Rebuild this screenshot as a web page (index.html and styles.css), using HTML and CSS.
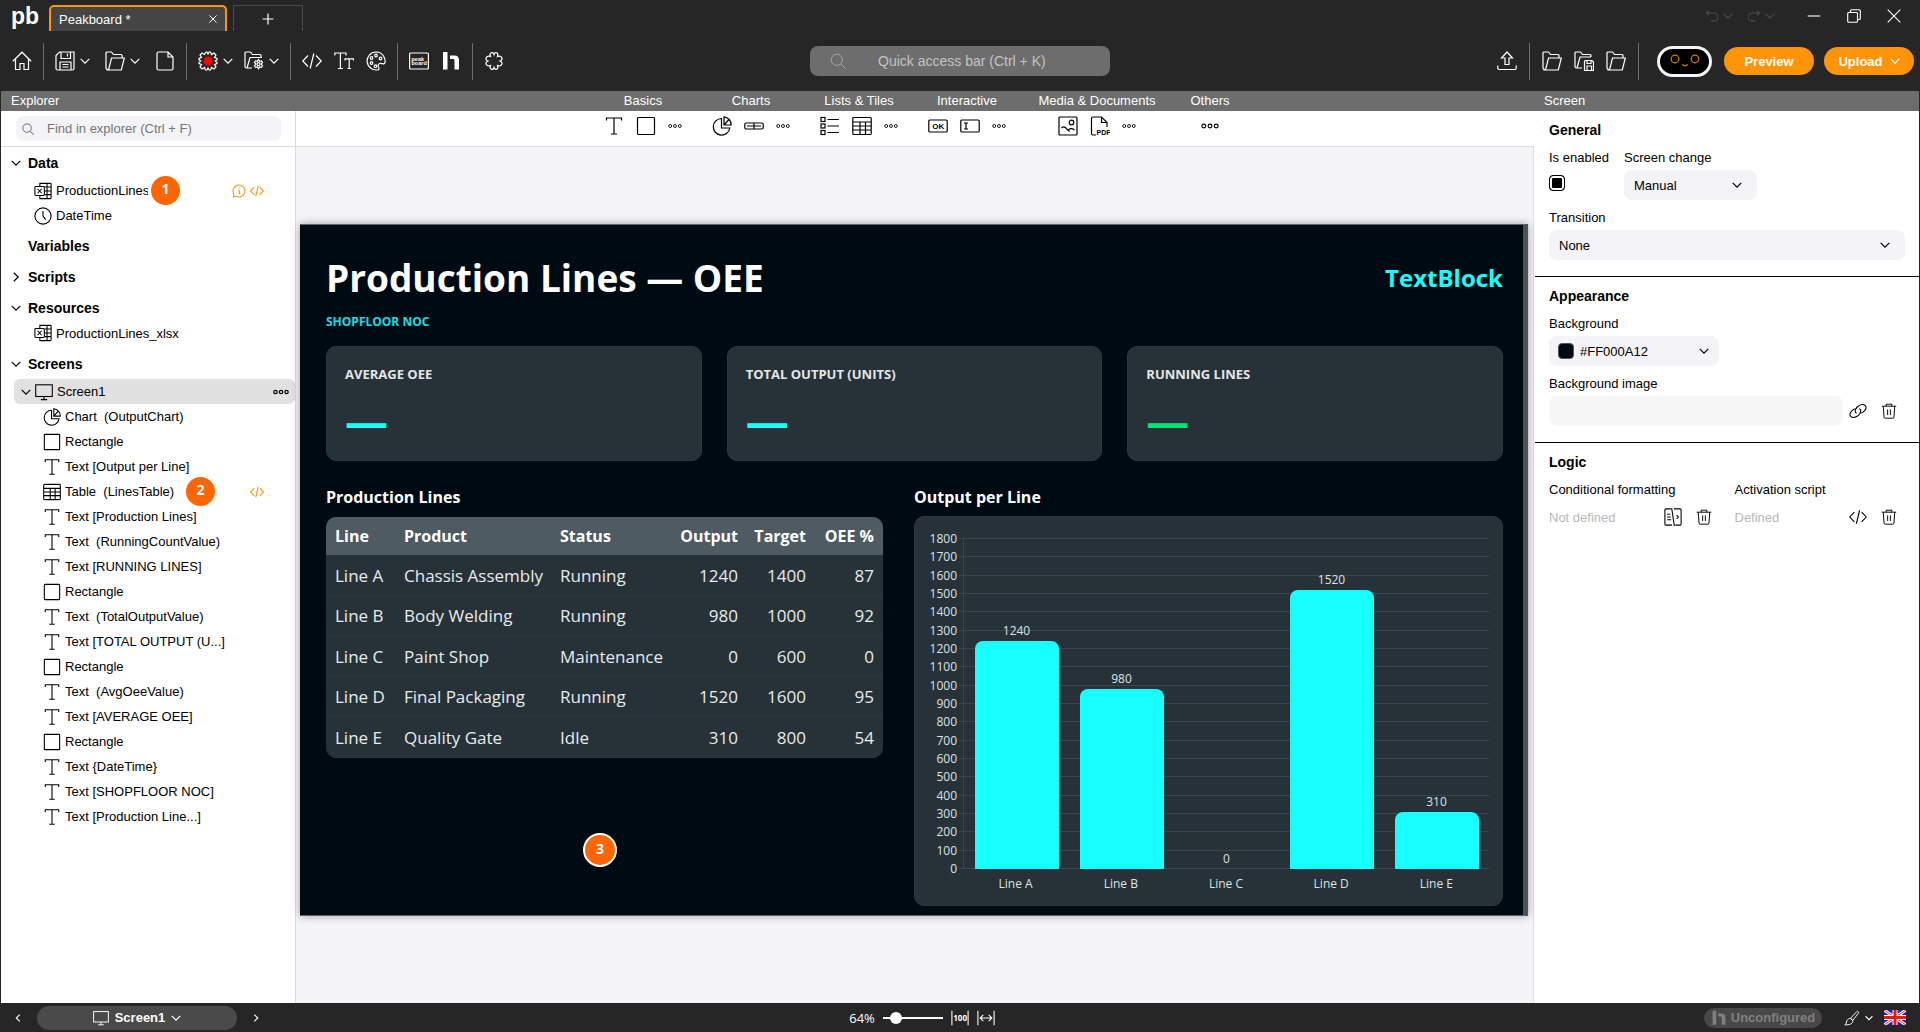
FILE: index.html
```html
<!DOCTYPE html>
<html lang="en">
<head>
    <meta charset="UTF-8">
    <title>Peakboard Designer</title>
    <link rel="stylesheet" href="styles.css">
</head>
<body>
    <!-- Icon set -->
    <svg class="icon-defs" aria-hidden="true">
        <symbol id="i-home" viewBox="0 0 20 20"><path d="M.8 10.2 10 1.2l9.200 9M3.500 8v10.500h4.500v-6h4v6h4.500V8"/></symbol>
        <symbol id="i-save" viewBox="0 0 20 20"><path d="M4.500 1H19v16.500a1.500 1.500 0 0 1-1.500 1.500h-15A1.500 1.500 0 0 1 1 17.500v-13zM6 1v6.500h9.500V1M12.500 2.500v3M5 19v-8h11v8M7.500 13.500h6M7.500 16h6"/></symbol>
        <symbol id="i-folder" viewBox="0 0 20 20"><path d="M1 17V2a1 1 0 0 1 1-1h4.500l2 2.500H16a1 1 0 0 1 1 1V7M1.500 19h14.800l3-12H6.500L3.500 19M1 17a2 2 0 0 0 2.500 1.500"/></symbol>
        <symbol id="i-file" viewBox="0 0 20 20"><path d="M2 2.500A1.500 1.500 0 0 1 3.500 1H13l5 5v11.500a1.500 1.500 0 0 1-1.500 1.500h-13A1.500 1.500 0 0 1 2 17.500zM13 1v5h5"/></symbol>
        <symbol id="i-gear" viewBox="0 0 20 20"><path d="M8 1h1l1 2 1-2h1.500l1 2.500L16 2l2 2-1.500 2.500L19 7.500v1.200L17.300 10l1.700 1.200v1.300l-2.500 1L18 16l-2 2-2.500-1.500-1 2.500H11l-1-2-1 2H7.500l-1-2.500L4 18l-2-2 1.500-2.500-2.500-1v-1.300L2.700 10 1 8.700V7.500l2.500-1L2 4l2-2 2.500 1.500z"/></symbol>
        <symbol id="i-folder-gear" viewBox="0 0 20 20"><path d="M8 17H2.500A1.500 1.500 0 0 1 1 15.500V2a1 1 0 0 1 1-1h4.500l2 2.500H16a1 1 0 0 1 1 1V7M3 17 6 6.500h12M14.500 8.500l1 1.800 2-.4 1 1.600-1.400 1.500 1.400 1.700-1 1.600-2-.4-1 1.800-1-1.800-2 .4-1-1.600 1.400-1.700-1.400-1.500 1-1.600 2 .4z"/><circle cx="14.500" cy="13.200" r="1.500"/></symbol>
        <symbol id="i-folder-save" viewBox="0 0 20 20"><path d="M8 17H2.500A1.500 1.500 0 0 1 1 15.500V2a1 1 0 0 1 1-1h4.500l2 2.500H16a1 1 0 0 1 1 1V6M3 17 6 6h11M11 9.500h7l1.500 1.500v8.500h-9v-9zM13 9.500v3h4v-3M13 19v-4h4.500v4"/></symbol>
        <symbol id="i-code" viewBox="0 0 20 20"><path d="M6 4.500.8 10 6 15.500M14 4.500l5.200 5.500-5.200 5.500M11.800 2.500l-3.600 15"/></symbol>
        <symbol id="i-tt" viewBox="0 0 20 20"><path d="M.8 4.500V2H12v2.500M6.400 2v15.500M4 17.500h5M11 9.500V7.800h8.500v1.700M15.200 7.800v9.700M13.500 17.500H17"/></symbol>
        <symbol id="i-palette" viewBox="0 0 20 20"><path d="M10 1a9 9 0 1 0 2 17.800c1.500-.4 1-2 .4-3-.8-1.500 0-3 1.600-3.300 1.800-.3 3 .8 4.200.2C20 11 19 1 10 1z"/><circle cx="10" cy="4.500" r="1.300"/><circle cx="5.500" cy="7" r="1.300"/><circle cx="14.500" cy="7.500" r="1.300"/><circle cx="5.500" cy="12" r="1.300"/><circle cx="9.500" cy="15.200" r="1.300"/></symbol>
        <symbol id="i-board" viewBox="0 0 20 20"><rect x=".6" y="2" width="18.800" height="16" rx="1"/><text x="2.500" y="9.500" font-size="5.500">peak</text><text x="2.500" y="13.800" font-size="5.500">board</text></symbol>
        <symbol id="i-h" viewBox="0 0 20 20"><path class="solid" d="M2 1h4.500v17.500H2zM9 4.500h4.500c3 0 4.500 1.800 4.500 4.500v9.500h-4.500V10c0-1.400-.6-2-2-2H9z"/></symbol>
        <symbol id="i-clover" viewBox="0 0 20 20"><path d="M6.500 5.500C5 1.500 9 0 10 3.500c1-3.500 5-2 3.500 2 4-1.500 6.500 3 2.500 4.500 4 1.500 1.500 6-2.500 4.500 1.500 4-2.500 5.500-3.500 2-1 3.500-5 2-3.500-2-4 1.500-6.500-3-2.500-4.500C0 8.500 2.500 4 6.500 5.500z"/></symbol>
        <symbol id="i-upload" viewBox="0 0 20 20"><path d="M10 1 4.500 7H8v6.500h4V7h3.500zM.8 14.500V17a1.500 1.500 0 0 0 1.500 1.500h15.400a1.500 1.500 0 0 0 1.500-1.500v-2.500"/></symbol>
        <symbol id="i-down" viewBox="0 0 10 10"><path d="M.7 2.800 5 7.200l4.300-4.400"/></symbol>
        <symbol id="i-right" viewBox="0 0 10 10"><path d="M2.800.7 7.200 5 2.800 9.300"/></symbol>
        <symbol id="i-left" viewBox="0 0 10 10"><path d="M7.200.7 2.800 5l4.400 4.300"/></symbol>
        <symbol id="i-search" viewBox="0 0 20 20"><circle cx="8.500" cy="8.500" r="7"/><path d="m13.500 13.500 6 6"/></symbol>
        <symbol id="i-dots" viewBox="0 0 16 6"><circle cx="2.500" cy="3" r="1.700"/><circle cx="8" cy="3" r="1.700"/><circle cx="13.500" cy="3" r="1.700"/></symbol>
        <symbol id="i-text" viewBox="0 0 20 20"><path d="M2.500 4.500V2h15v2.500M10 2v16M7 18h6"/></symbol>
        <symbol id="i-rect" viewBox="0 0 20 20"><rect x="1.500" y="1.500" width="17" height="17" rx=".8"/></symbol>
        <symbol id="i-pie" viewBox="0 0 20 20"><path d="M9.500 2.500a8.300 8.300 0 1 0 8.300 9.500H9.500zM12 .8V9h7.200A8 8 0 0 0 12 .8zM12 9l5-5.500"/></symbol>
        <symbol id="i-gauge" viewBox="0 0 20 20"><rect x=".8" y="7" width="18.400" height="6" rx="1.500"/><path d="M10 7v6M3 10h14"/></symbol>
        <symbol id="i-list" viewBox="0 0 20 20"><rect x="1" y="1.500" width="4" height="4"/><rect x="1" y="8" width="4" height="4"/><rect x="1" y="14.500" width="4" height="4"/><path d="M7.500 3.500H19M7.500 10H19M7.500 16.500H19"/></symbol>
        <symbol id="i-table" viewBox="0 0 20 20"><rect x=".8" y="1.500" width="18.400" height="17" rx="1"/><path d="M.8 6h18.400M.8 10h18.400M.8 14h18.400M8 6v12.500M13.500 6v12.500"/></symbol>
        <symbol id="i-ok" viewBox="0 0 20 20"><rect x=".8" y="4" width="18.400" height="12" rx="1"/><text x="4.200" y="13" font-size="8">OK</text></symbol>
        <symbol id="i-input" viewBox="0 0 20 20"><rect x=".8" y="4" width="18.400" height="12" rx="1"/><path d="M4 7h4M6 7v6M4 13h4"/></symbol>
        <symbol id="i-image" viewBox="0 0 20 20"><rect x="1" y="1" width="18" height="18" rx="1"/><circle cx="13.500" cy="6.500" r="2.300"/><path d="M3.500 12c3-3 5 1 8 3.500M10.500 14c2-2 4-1.500 6 0"/></symbol>
        <symbol id="i-pdf" viewBox="0 0 20 20"><path d="M6 19H3a1.500 1.500 0 0 1-1.500-1.500v-15A1.500 1.500 0 0 1 3 1h8.500L17 6.500V11M11.500 1v5.500H17"/><text x="6.500" y="19" font-size="7">PDF</text></symbol>
        <symbol id="i-excel" viewBox="0 0 20 20"><path d="M6.500 5V1.500H18a1 1 0 0 1 1 1v15a1 1 0 0 1-1 1H6.500V15M12 5.500h7M12 10h7M12 14h7M14.500 1.500v17"/><rect x="1" y="5" width="10.500" height="10" rx="1"/><path d="m4 7.500 4.500 5M8.500 7.500 4 12.500"/></symbol>
        <symbol id="i-clock" viewBox="0 0 20 20"><circle cx="10" cy="10" r="9"/><path d="M10 4.500V10l3 4"/></symbol>
        <symbol id="i-screen" viewBox="0 0 20 20"><rect x=".8" y="2" width="18.400" height="13"/><path d="M10 15v3M6.500 18.500h7"/></symbol>
        <symbol id="i-info" viewBox="0 0 20 20"><path d="M2 18.500 2.500 14A8.500 8.500 0 1 1 6 17.500zM10.500 9v5M9 9h1.500M9 14h3M10 5.500h1"/></symbol>
        <symbol id="i-link" viewBox="0 0 20 20"><path d="M8.500 12.500C5 11 8 6 10.500 4.500c3-2 5.500-2.500 7.500-.5s.5 5-2 7c-1.200 1-2.500 1.500-4 1.500M11.500 7.500C15 9 12 14 9.500 15.500c-3 2-5.500 2.500-7.500.5s-.5-5 2-7c1.200-1 2.500-1.500 4-1.500"/></symbol>
        <symbol id="i-trash" viewBox="0 0 20 20"><path d="M1 4h18M6.500 4V1.500h7V4M2.800 4l1 13.500a1.500 1.500 0 0 0 1.500 1.500h9.400a1.500 1.500 0 0 0 1.500-1.500l1-13.500M8.300 8v7M11.700 8v7"/></symbol>
        <symbol id="i-split" viewBox="0 0 20 20"><path d="M7.500 1H2a1 1 0 0 0-1 1v16a1 1 0 0 0 1 1h7M12.500 19H18a1 1 0 0 0 1-1V2a1 1 0 0 0-1-1h-7M8.500 0l3 20M3.500 7H7M3.500 10h4M3.500 13H8M14 8l2 2-2 2"/></symbol>
        <symbol id="i-plus" viewBox="0 0 20 20"><path d="M10 1v18M1 10h18"/></symbol>
        <symbol id="i-close" viewBox="0 0 20 20"><path d="m1 1 18 18M19 1 1 19"/></symbol>
        <symbol id="i-min" viewBox="0 0 20 20"><path d="M1 10h18"/></symbol>
        <symbol id="i-restore" viewBox="0 0 20 20"><rect x="1" y="5" width="14" height="14" rx="1.500"/><path d="M5 5V2.500A1.500 1.500 0 0 1 6.500 1h11A1.500 1.500 0 0 1 19 2.500v11a1.500 1.500 0 0 1-1.500 1.500H15"/></symbol>
        <symbol id="i-undo" viewBox="0 0 20 20"><path d="M4.500 1 1 5l3.500 4M1 5h12.500a5.500 5.500 0 0 1 0 13H8"/></symbol>
        <symbol id="i-redo" viewBox="0 0 20 20"><path d="M15.500 1 19 5l-3.500 4M19 5H6.500a5.500 5.500 0 0 0 0 13H12"/></symbol>
        <symbol id="i-full" viewBox="0 0 20 20"><path d="M1 2v16M19 2v16"/><text x="2.500" y="13.500" font-size="9">100</text></symbol>
        <symbol id="i-fit" viewBox="0 0 20 20"><path d="M1 2v16M19 2v16M4 10h12M7 6.500 3.500 10 7 13.500M13 6.500l3.500 3.500-3.500 3.500"/></symbol>
        <symbol id="i-brush" viewBox="0 0 20 20"><path d="M8 10.500 16 2c1-1 3 .5 2 2l-7 9zM8 10.500l3 2.500c.5 4-4 6-10 5.500 2.500-1 1.500-3 2.500-5 .8-2 3-3 4.500-3z"/></symbol>
        <symbol id="i-flag" viewBox="0 0 22 15"><path class="flag-blue" d="M0 0h22v15H0z"/><path class="flag-white" d="m0 0 22 15M22 0 0 15"/><path class="flag-thin" d="m0 0 22 15M22 0 0 15"/><path class="flag-white flag-wide" d="M11 0v15M0 7.500h22"/><path class="flag-red" d="M11 0v15M0 7.500h22"/></symbol>
    </svg>

    <header class="titlebar">
        <span class="logo">pb</span>
        <div class="tab tab-active">
            <span>Peakboard *</span>
            <button class="plain" aria-label="Close tab"><svg class="icon icon-8"><use href="#i-close"/></svg></button>
        </div>
        <button class="tab tab-new" aria-label="New tab"><svg class="icon icon-12"><use href="#i-plus"/></svg></button>
        <div class="window-controls">
            <button class="plain history" aria-label="Undo"><svg class="icon icon-12"><use href="#i-undo"/></svg><svg class="icon icon-10"><use href="#i-down"/></svg></button>
            <button class="plain history" aria-label="Redo"><svg class="icon icon-12"><use href="#i-redo"/></svg><svg class="icon icon-10"><use href="#i-down"/></svg></button>
            <button class="plain window-btn" aria-label="Minimize"><svg class="icon icon-14"><use href="#i-min"/></svg></button>
            <button class="plain window-btn" aria-label="Restore"><svg class="icon icon-14"><use href="#i-restore"/></svg></button>
            <button class="plain window-btn" aria-label="Close"><svg class="icon icon-14"><use href="#i-close"/></svg></button>
        </div>
    </header>

    <nav class="toolbar">
        <div class="tools">
            <button class="plain" aria-label="Home"><svg class="icon"><use href="#i-home"/></svg></button>
            <span class="sep"></span>
            <div class="tools file-tools">
                <button class="plain split" aria-label="Save"><svg class="icon"><use href="#i-save"/></svg><svg class="icon icon-10"><use href="#i-down"/></svg></button>
                <button class="plain split" aria-label="Open"><svg class="icon"><use href="#i-folder"/></svg><svg class="icon icon-10"><use href="#i-down"/></svg></button>
                <button class="plain" aria-label="New"><svg class="icon"><use href="#i-file"/></svg></button>
            </div>
            <span class="sep"></span>
            <button class="plain split" aria-label="Settings"><svg class="icon" viewBox="0 0 20 20"><use href="#i-gear"/><circle class="alert-dot" cx="10" cy="10" r="4.500"/></svg><svg class="icon icon-10"><use href="#i-down"/></svg></button>
            <button class="plain split" aria-label="Project settings"><svg class="icon"><use href="#i-folder-gear"/></svg><svg class="icon icon-10"><use href="#i-down"/></svg></button>
            <span class="sep"></span>
            <div class="tools view-tools">
                <button class="plain" aria-label="Scripts"><svg class="icon"><use href="#i-code"/></svg></button>
                <button class="plain" aria-label="Fonts"><svg class="icon"><use href="#i-tt"/></svg></button>
                <button class="plain" aria-label="Colors"><svg class="icon"><use href="#i-palette"/></svg></button>
            </div>
            <span class="sep"></span>
            <div class="tools view-tools">
                <button class="plain" aria-label="Peakboard"><svg class="icon"><use href="#i-board"/></svg></button>
                <button class="plain" aria-label="Hub"><svg class="icon"><use href="#i-h"/></svg></button>
            </div>
            <span class="sep"></span>
            <button class="plain" aria-label="Extensions"><svg class="icon"><use href="#i-clover"/></svg></button>
        </div>
        <label class="quick-search">
            <svg class="icon icon-16"><use href="#i-search"/></svg>
            <input type="text" placeholder="Quick access bar (Ctrl + K)" aria-label="Quick access bar">
        </label>
        <div class="tools tools-right">
            <button class="plain" aria-label="Export"><svg class="icon"><use href="#i-upload"/></svg></button>
            <span class="sep"></span>
            <button class="plain" aria-label="Open folder"><svg class="icon"><use href="#i-folder"/></svg></button>
            <button class="plain" aria-label="Save to folder"><svg class="icon"><use href="#i-folder-save"/></svg></button>
            <button class="plain" aria-label="Browse"><svg class="icon"><use href="#i-folder"/></svg></button>
            <span class="sep"></span>
            <button class="assistant" aria-label="Assistant">
                <svg viewBox="0 0 32 16"><circle cx="6" cy="6" r="3.800"/><circle cx="26" cy="6" r="3.800"/><path d="M13.500 11c.5 2.500 4.500 2.500 5 0"/></svg>
            </button>
            <div class="actions">
                <button class="action">Preview</button>
                <button class="action">Upload <svg class="icon icon-10"><use href="#i-down"/></svg></button>
            </div>
        </div>
    </nav>

    <main class="workspace">
        <aside class="explorer">
            <h2 class="panel-title">Explorer</h2>
            <div class="explorer-search">
                <label class="search-box">
                    <svg class="icon icon-12"><use href="#i-search"/></svg>
                    <input type="text" placeholder="Find in explorer (Ctrl + F)" aria-label="Find in explorer">
                </label>
            </div>
            <div class="tree">
                <h3><svg class="icon icon-10"><use href="#i-down"/></svg>Data</h3>
                <ul class="tree-data">
                    <li>
                        <svg class="icon icon-18"><use href="#i-excel"/></svg><span class="clipped">ProductionLines</span>
                        <span class="badge">1</span>
                        <span class="row-icons"><svg class="icon icon-14"><use href="#i-info"/></svg><svg class="icon icon-14"><use href="#i-code"/></svg></span>
                    </li>
                    <li><svg class="icon icon-18"><use href="#i-clock"/></svg>DateTime</li>
                </ul>
                <h3><span class="no-chevron"></span>Variables</h3>
                <h3><svg class="icon icon-10"><use href="#i-right"/></svg>Scripts</h3>
                <h3><svg class="icon icon-10"><use href="#i-down"/></svg>Resources</h3>
                <ul class="tree-resources">
                    <li><svg class="icon icon-18"><use href="#i-excel"/></svg>ProductionLines_xlsx</li>
                </ul>
                <h3><svg class="icon icon-10"><use href="#i-down"/></svg>Screens</h3>
                <div class="screen-row">
                    <svg class="icon icon-10"><use href="#i-down"/></svg>
                    <svg class="icon icon-18"><use href="#i-screen"/></svg>
                    <span>Screen1</span>
                    <button class="plain" aria-label="More"><svg class="icon dots"><use href="#i-dots"/></svg></button>
                </div>
                <ul class="tree-controls">
                    <li><svg class="icon icon-18"><use href="#i-pie"/></svg>Chart&nbsp; (OutputChart)</li>
                    <li><svg class="icon icon-18"><use href="#i-rect"/></svg>Rectangle</li>
                    <li><svg class="icon icon-18"><use href="#i-text"/></svg>Text [Output per Line]</li>
                    <li>
                        <svg class="icon icon-18"><use href="#i-table"/></svg><span>Table&nbsp; (LinesTable)</span>
                        <span class="badge badge-table">2</span>
                        <span class="row-icons"><svg class="icon icon-14"><use href="#i-code"/></svg></span>
                    </li>
                    <li><svg class="icon icon-18"><use href="#i-text"/></svg>Text [Production Lines]</li>
                    <li><svg class="icon icon-18"><use href="#i-text"/></svg>Text&nbsp; (RunningCountValue)</li>
                    <li><svg class="icon icon-18"><use href="#i-text"/></svg>Text [RUNNING LINES]</li>
                    <li><svg class="icon icon-18"><use href="#i-rect"/></svg>Rectangle</li>
                    <li><svg class="icon icon-18"><use href="#i-text"/></svg>Text&nbsp; (TotalOutputValue)</li>
                    <li><svg class="icon icon-18"><use href="#i-text"/></svg>Text [TOTAL OUTPUT (U...]</li>
                    <li><svg class="icon icon-18"><use href="#i-rect"/></svg>Rectangle</li>
                    <li><svg class="icon icon-18"><use href="#i-text"/></svg>Text&nbsp; (AvgOeeValue)</li>
                    <li><svg class="icon icon-18"><use href="#i-text"/></svg>Text [AVERAGE OEE]</li>
                    <li><svg class="icon icon-18"><use href="#i-rect"/></svg>Rectangle</li>
                    <li><svg class="icon icon-18"><use href="#i-text"/></svg>Text {DateTime}</li>
                    <li><svg class="icon icon-18"><use href="#i-text"/></svg>Text [SHOPFLOOR NOC]</li>
                    <li><svg class="icon icon-18"><use href="#i-text"/></svg>Text [Production Line...]</li>
                </ul>
            </div>
        </aside>

        <section class="editor">
            <div class="palette palette-titles">
                <span>Basics</span><span>Charts</span><span>Lists &amp; Tiles</span><span>Interactive</span><span>Media &amp; Documents</span><span>Others</span>
            </div>
            <div class="palette palette-icons">
                <div><svg class="icon"><use href="#i-text"/></svg><svg class="icon"><use href="#i-rect"/></svg><svg class="icon dots"><use href="#i-dots"/></svg></div>
                <div><svg class="icon"><use href="#i-pie"/></svg><svg class="icon"><use href="#i-gauge"/></svg><svg class="icon dots"><use href="#i-dots"/></svg></div>
                <div><svg class="icon"><use href="#i-list"/></svg><svg class="icon"><use href="#i-table"/></svg><svg class="icon dots"><use href="#i-dots"/></svg></div>
                <div><svg class="icon"><use href="#i-ok"/></svg><svg class="icon"><use href="#i-input"/></svg><svg class="icon dots"><use href="#i-dots"/></svg></div>
                <div><svg class="icon"><use href="#i-image"/></svg><svg class="icon"><use href="#i-pdf"/></svg><svg class="icon dots"><use href="#i-dots"/></svg></div>
                <div><svg class="icon dots dots-large"><use href="#i-dots"/></svg></div>
            </div>

            <div class="stage">
                <div class="board">
                    <div class="board-head">
                        <h1>Production Lines — OEE</h1>
                        <span class="board-clock">TextBlock</span>
                    </div>
                    <p class="board-sub">SHOPFLOOR NOC</p>

                    <div class="cards">
                        <div class="card"><h4>AVERAGE OEE</h4><span class="value">—</span></div>
                        <div class="card"><h4>TOTAL OUTPUT (UNITS)</h4><span class="value">—</span></div>
                        <div class="card"><h4>RUNNING LINES</h4><span class="value value-ok">—</span></div>
                    </div>

                    <div class="board-columns">
                        <div>
                            <h2 class="board-title">Production Lines</h2>
                            <table class="lines-table">
                                <thead>
                                    <tr><th class="c-line">Line</th><th class="c-product">Product</th><th class="c-status">Status</th><th class="num">Output</th><th class="num c-small">Target</th><th class="num c-small">OEE %</th></tr>
                                </thead>
                                <tbody>
                                    <tr><td>Line A</td><td>Chassis Assembly</td><td>Running</td><td class="num">1240</td><td class="num">1400</td><td class="num">87</td></tr>
                                    <tr><td>Line B</td><td>Body Welding</td><td>Running</td><td class="num">980</td><td class="num">1000</td><td class="num">92</td></tr>
                                    <tr><td>Line C</td><td>Paint Shop</td><td>Maintenance</td><td class="num">0</td><td class="num">600</td><td class="num">0</td></tr>
                                    <tr><td>Line D</td><td>Final Packaging</td><td>Running</td><td class="num">1520</td><td class="num">1600</td><td class="num">95</td></tr>
                                    <tr><td>Line E</td><td>Quality Gate</td><td>Idle</td><td class="num">310</td><td class="num">800</td><td class="num">54</td></tr>
                                </tbody>
                            </table>
                        </div>
                        <div>
                            <h2 class="board-title">Output per Line</h2>
                            <div class="chart">
                                <div class="y-axis">
                                    <span>1800</span><span>1700</span><span>1600</span><span>1500</span><span>1400</span><span>1300</span><span>1200</span><span>1100</span><span>1000</span><span>900</span><span>800</span><span>700</span><span>600</span><span>500</span><span>400</span><span>300</span><span>200</span><span>100</span><span>0</span>
                                </div>
                                <div class="plot">
                                    <div class="grid-lines"><i></i><i></i><i></i><i></i><i></i><i></i><i></i><i></i><i></i><i></i><i></i><i></i><i></i><i></i><i></i><i></i><i></i><i></i><i></i></div>
                                    <div class="bars">
                                        <div class="bar-slot"><span>1240</span><div class="bar" style="height: 68.9%"></div></div>
                                        <div class="bar-slot"><span>980</span><div class="bar" style="height: 54.4%"></div></div>
                                        <div class="bar-slot"><span>0</span><div class="bar" style="height: 0%"></div></div>
                                        <div class="bar-slot"><span>1520</span><div class="bar" style="height: 84.4%"></div></div>
                                        <div class="bar-slot"><span>310</span><div class="bar" style="height: 17.2%"></div></div>
                                    </div>
                                </div>
                                <div class="x-axis"><span>Line A</span><span>Line B</span><span>Line C</span><span>Line D</span><span>Line E</span></div>
                            </div>
                        </div>
                    </div>
                    <span class="badge badge-board">3</span>
                </div>
            </div>
        </section>

        <aside class="properties">
            <h2 class="panel-title">Screen</h2>
            <section class="group">
                <h3>General</h3>
                <div class="field-row">
                    <div class="field">
                        <label for="enabled">Is enabled</label>
                        <div class="control"><input type="checkbox" id="enabled" checked></div>
                    </div>
                    <div class="field field-change">
                        <label for="change">Screen change</label>
                        <div class="select"><select id="change"><option>Manual</option></select><svg class="icon icon-10"><use href="#i-down"/></svg></div>
                    </div>
                </div>
                <div class="field">
                    <label for="transition">Transition</label>
                    <div class="select"><select id="transition"><option>None</option></select><svg class="icon icon-10"><use href="#i-down"/></svg></div>
                </div>
            </section>
            <section class="group">
                <h3>Appearance</h3>
                <div class="field field-color">
                    <label for="background">Background</label>
                    <div class="select"><span class="swatch"></span><select id="background"><option>#FF000A12</option></select><svg class="icon icon-10"><use href="#i-down"/></svg></div>
                </div>
                <div class="field">
                    <label for="bg-image">Background image</label>
                    <div class="control">
                        <input type="text" id="bg-image">
                        <button class="plain" aria-label="Link"><svg class="icon icon-18"><use href="#i-link"/></svg></button>
                        <button class="plain" aria-label="Remove image"><svg class="icon icon-16"><use href="#i-trash"/></svg></button>
                    </div>
                </div>
            </section>
            <section class="group">
                <h3>Logic</h3>
                <div class="logic-row">
                    <div class="field">
                        <span class="label">Conditional formatting</span>
                        <div class="control">
                            <span class="state">Not defined</span>
                            <button class="plain" aria-label="Edit formatting"><svg class="icon icon-18"><use href="#i-split"/></svg></button>
                            <button class="plain" aria-label="Remove formatting"><svg class="icon icon-16"><use href="#i-trash"/></svg></button>
                        </div>
                    </div>
                    <div class="field">
                        <span class="label">Activation script</span>
                        <div class="control">
                            <span class="state">Defined</span>
                            <button class="plain" aria-label="Edit script"><svg class="icon icon-18"><use href="#i-code"/></svg></button>
                            <button class="plain" aria-label="Remove script"><svg class="icon icon-16"><use href="#i-trash"/></svg></button>
                        </div>
                    </div>
                </div>
            </section>
        </aside>
    </main>

    <footer class="statusbar">
        <div class="screen-nav">
            <button class="plain" aria-label="Previous screen"><svg class="icon icon-8"><use href="#i-left"/></svg></button>
            <button class="screen-pill"><svg class="icon icon-16"><use href="#i-screen"/></svg>Screen1<svg class="icon icon-10"><use href="#i-down"/></svg></button>
            <button class="plain" aria-label="Next screen"><svg class="icon icon-8"><use href="#i-right"/></svg></button>
        </div>
        <div class="zoom">
            <label for="zoom">64%</label>
            <input type="range" id="zoom" min="0" max="100" value="14">
            <button class="plain" aria-label="Actual size"><svg class="icon icon-18"><use href="#i-full"/></svg></button>
            <button class="plain" aria-label="Fit width"><svg class="icon icon-18"><use href="#i-fit"/></svg></button>
        </div>
        <div class="status-right">
            <button class="hub-state"><svg class="icon icon-16"><use href="#i-h"/></svg>Unconfigured</button>
            <button class="plain theme" aria-label="Theme"><svg class="icon icon-16"><use href="#i-brush"/></svg><svg class="icon icon-8"><use href="#i-down"/></svg></button>
            <svg class="flag"><use href="#i-flag"/></svg>
        </div>
    </footer>
</body>
</html>
```

FILE: styles.css
```css
* {
    box-sizing: border-box;
}

body {
    display: flex;
    flex-direction: column;
    min-height: 100vh;
    margin: 0;
    background-color: #262626;
    color: #000;
    font-family: "Liberation Sans", Arial, sans-serif;
    font-size: 13px;
}

h1, h2, h3, h4, p, ul {
    margin: 0;
    padding: 0;
}

button, input, select {
    font: inherit;
    color: inherit;
}

/* Icons */
.icon-defs {
    display: none;
}

.icon {
    display: block;
    flex: none;
    width: 20px;
    height: 20px;
    fill: none;
    stroke: currentColor;
    stroke-width: 1.2px;
}

.icon-18 { width: 18px; height: 18px; }
.icon-16 { width: 16px; height: 16px; }
.icon-14 { width: 14px; height: 14px; stroke-width: 1.6px; }
.icon-12 { width: 12px; height: 12px; stroke-width: 2px; }
.icon-10 { width: 10px; height: 10px; }
.icon-8 { width: 8px; height: 8px; stroke-width: 1.4px; }

symbol text {
    fill: currentColor;
    stroke: none;
    font-weight: bold;
}

.solid {
    fill: currentColor;
    stroke: none;
}

.dots {
    width: 14px;
    height: 6px;
}

.dots-large {
    width: 18px;
    height: 8px;
}

.plain {
    display: flex;
    align-items: center;
    padding: 0;
    border: none;
    background: none;
    cursor: pointer;
}

/* Title bar */
.titlebar {
    display: flex;
    height: 31px;
    padding-left: 11px;
    color: #fff;
}

.logo {
    width: 38px;
    line-height: 32px;
    font-size: 23px;
    font-weight: bold;
}

.tab {
    display: flex;
    align-items: center;
    justify-content: space-between;
    margin-top: 5px;
}

.tab-active {
    width: 178px;
    margin-right: 6px;
    padding: 0 8px;
    border: 2px solid #ff9408;
    border-bottom: none;
    border-radius: 5px 5px 0 0;
    background-color: #454545;
}

.tab-active .icon {
    stroke-width: 2.4px;
}

.tab-new {
    justify-content: center;
    width: 70px;
    border: 1px solid #4a4a4a;
    border-bottom: none;
    background: none;
}

.window-controls {
    display: flex;
    align-items: center;
    margin-left: auto;
    padding-right: 19px;
}

.history {
    gap: 5px;
    margin-right: 15px;
    color: #4c4c4c;
}

.window-btn {
    margin-left: 26px;
}

.history + .window-btn {
    margin-left: 17px;
}

/* Toolbar */
.toolbar {
    display: grid;
    grid-template-columns: 1fr 300px 1fr;
    align-items: center;
    height: 60px;
    padding: 0 6px 0 12px;
    color: #fff;
}

.tools {
    display: flex;
    align-items: center;
    gap: 11px;
}

.file-tools {
    gap: 15px;
}

.view-tools,
.tools-right {
    gap: 12px;
}

.split {
    gap: 5px;
}

.sep {
    width: 1px;
    height: 37px;
    background-color: #6d6d6d;
}

.alert-dot {
    fill: #f00;
    stroke: none;
}

.quick-search {
    display: flex;
    align-items: center;
    gap: 32px;
    height: 30px;
    margin-left: -3px;
    margin-right: 3px;
    padding-left: 20px;
    border-radius: 8px;
    background-color: #6d6d6d;
    color: #a8a8a8;
    font-size: 14px;
}

.quick-search input,
.search-box input {
    width: 100%;
    min-width: 0;
    padding: 0;
    border: none;
    outline: none;
    background: none;
}

.quick-search input::placeholder {
    color: #c4c4c4;
}

.tools-right {
    justify-content: flex-end;
}

.assistant {
    display: flex;
    align-items: center;
    justify-content: center;
    width: 55px;
    height: 31px;
    margin-left: 6px;
    padding: 0;
    border: 3px solid #f4f3f8;
    border-radius: 16px;
    background-color: #000;
}

.assistant svg {
    flex: none;
    width: 32px;
    height: 16px;
    fill: none;
    stroke: #d9820c;
    stroke-width: 1.2px;
}

.actions {
    display: flex;
    gap: 10px;
}

.action {
    display: flex;
    align-items: center;
    justify-content: center;
    gap: 7px;
    width: 90px;
    height: 28px;
    padding: 0;
    border: none;
    border-radius: 14px;
    background-color: #ff9408;
    font-weight: bold;
}

/* Workspace */
.workspace {
    display: grid;
    flex: 1;
    grid-template-columns: 295px 1fr 385px;
    margin: 0 1px;
    background-color: #fff;
}

.panel-title {
    height: 20px;
    padding-left: 10px;
    background-color: #6d6d6d;
    color: #fff;
    font-size: 13px;
    font-weight: normal;
    line-height: 20px;
}

.explorer {
    border-right: 1px solid #dcdcdc;
}

.explorer .panel-title {
    margin-right: -1px;
}

.explorer-search {
    padding: 5px 14px 5px 15px;
    border-bottom: 1px solid #dcdcdc;
}

.search-box {
    display: flex;
    align-items: center;
    gap: 13px;
    height: 25px;
    padding-left: 6px;
    border-radius: 8px;
    background-color: #f4f3f8;
    color: #8a8a8a;
}

.search-box input::placeholder {
    color: #757575;
}

.tree h3 {
    display: flex;
    align-items: center;
    gap: 7px;
    height: 31px;
    padding-left: 10px;
    font-size: 14px;
}

.no-chevron {
    width: 10px;
}

.tree ul {
    list-style: none;
}

.tree li {
    display: flex;
    position: relative;
    align-items: center;
    gap: 4px;
    height: 25px;
    white-space: nowrap;
}

.tree-data {
    margin-bottom: 2px;
}

.tree-data li,
.tree-resources li {
    padding-left: 33px;
}

.tree .tree-resources {
    margin-bottom: 5px;
}

.tree .tree-resources li {
    height: 20px;
}

.tree-controls li {
    padding-left: 42px;
}

.clipped {
    width: 92px;
    overflow: hidden;
}

.screen-row {
    display: flex;
    align-items: center;
    gap: 4px;
    height: 25px;
    margin-left: 13px;
    padding: 0 6px 0 7px;
    border-radius: 6px;
    background-color: #e1e1e1;
}

.screen-row button {
    margin-left: auto;
}

.screen-row .dots {
    width: 16px;
}

.row-icons {
    display: flex;
    gap: 4px;
    margin-left: auto;
    padding-right: 31px;
    color: #f79a20;
}

.badge {
    position: absolute;
    top: -2px;
    left: 150px;
    width: 29px;
    height: 29px;
    border-radius: 50%;
    background-color: #f60;
    color: #fff;
    font-family: "Open Sans", "Noto Sans", sans-serif;
    font-size: 14px;
    font-weight: bold;
    line-height: 25px;
    text-align: center;
}

.badge-table {
    left: 185px;
}

/* Editor */
.editor {
    display: flex;
    flex-direction: column;
    background-color: #f4f3f8;
}

.palette {
    display: grid;
    grid-template-columns: 84px 84px 84px 84px 128px 50px;
    column-gap: 24px;
    justify-content: center;
    align-items: center;
    padding-left: 6px;
}

.palette-titles {
    height: 20px;
    padding-bottom: 2px;
    background-color: #6d6d6d;
    color: #fff;
    text-align: center;
}

.palette-icons {
    height: 36px;
    padding-bottom: 6px;
    border-bottom: 1px solid #dcdcdc;
    background-color: #fff;
}

.palette-icons div {
    display: flex;
    align-items: center;
    justify-content: center;
    gap: 12px;
}

.palette-icons .dots {
    stroke-width: 1px;
}

.stage {
    flex: 1;
    padding: 77px 5px 87px 4px;
    border-right: 1px solid #dcdcdc;
}

.board {
    position: relative;
    padding: 25px 20px 9px 26px;
    border-top: 1px solid #5c6469;
    border-right: 5px solid #4b525a;
    border-bottom: 1px solid #5c6469;
    background-color: #000a12;
    box-shadow: 0 0 8px rgba(0, 0, 0, 0.35);
    color: #fff;
    font-family: "Open Sans", "Noto Sans", sans-serif;
}

.board-head {
    display: flex;
    align-items: center;
    justify-content: space-between;
    height: 54px;
}

.board h1 {
    font-size: 37px;
}

.board-clock {
    color: #18ffff;
    font-size: 24px;
    font-weight: bold;
}

.board-sub {
    margin-top: 8px;
    color: #12dfe0;
    font-size: 12px;
    font-weight: bold;
    line-height: 20px;
}

.cards {
    display: grid;
    grid-template-columns: repeat(3, 1fr);
    gap: 25px;
    margin-top: 14px;
}

.card {
    height: 115px;
    padding: 17px 18px;
    border: 1px solid #2b383f;
    border-radius: 10px;
    background-color: #263238;
}

.card h4 {
    color: #e4e6e7;
    font-size: 13px;
    font-weight: bold;
    line-height: 20px;
}

.value {
    display: block;
    margin-top: 10px;
    color: #18ffff;
    font-size: 43px;
    font-weight: bold;
    line-height: 54px;
}

.value-ok {
    color: #00e676;
}

.board-columns {
    display: grid;
    grid-template-columns: 557fr 589fr;
    gap: 31px;
    margin-top: 24px;
}

.board-title {
    font-size: 16px;
    line-height: 24px;
}

.lines-table {
    width: 100%;
    margin-top: 8px;
    border-radius: 10px;
    border-spacing: 0;
    background-color: #263238;
    overflow: hidden;
    table-layout: fixed;
    font-size: 17px;
}

.lines-table th {
    height: 38px;
    padding: 0 9px;
    background-color: #4f5b62;
    font-size: 16px;
    text-align: left;
}

.lines-table td {
    height: 40px;
    padding: 0 9px;
    border-bottom: 1px solid #2b383f;
    color: #e9ebec;
    white-space: nowrap;
}

.lines-table tr:nth-child(odd) td {
    height: 41px;
}

.lines-table .num {
    padding-left: 0;
    text-align: right;
}

.c-line { width: 69px; }
.c-product { width: 156px; }
.c-status { width: 118px; }
.c-small { width: 68px; }

.chart {
    display: grid;
    grid-template-columns: 28px 1fr;
    grid-template-rows: 331px auto;
    align-content: start;
    column-gap: 6px;
    height: 390px;
    margin-top: 7px;
    padding: 21px 13px 0 14px;
    border: 1px solid #2b383f;
    border-radius: 10px;
    background-color: #263238;
    color: #dfe2e4;
    font-size: 12px;
}

.y-axis {
    display: flex;
    flex-direction: column;
    justify-content: space-between;
    text-align: right;
}

.y-axis span {
    height: 1px;
    line-height: 1px;
}

.plot {
    position: relative;
    border-left: 1px solid #37474f;
}

.grid-lines {
    display: flex;
    flex-direction: column;
    justify-content: space-between;
    height: 100%;
    margin-left: -5px;
}

.grid-lines i {
    height: 1px;
    background-color: #37474f;
}

.bars {
    display: flex;
    position: absolute;
    inset: 0;
}

.bar-slot {
    display: flex;
    flex: 1;
    flex-direction: column;
    align-items: center;
    justify-content: flex-end;
}

.bar-slot span {
    line-height: 20px;
}

.bar {
    flex: none;
    width: 80%;
    border-radius: 8px 8px 0 0;
    background-color: #18ffff;
}

.x-axis {
    display: flex;
    grid-column: 2;
    text-align: center;
}

.x-axis span {
    flex: 1;
    line-height: 30px;
}

.board .badge-board {
    top: 608px;
    left: 283px;
    width: 34px;
    height: 34px;
    border: 2px solid #fff;
    line-height: 28px;
}

/* Properties */
.group {
    margin-left: 1px;
    padding: 9px 14px 16px;
    border-bottom: 1px solid #000;
}

.group:last-child {
    border-bottom: none;
}

.group h3 {
    font-size: 14px;
    line-height: 20px;
}

.field {
    margin-top: 8px;
}

.field label,
.field .label {
    display: block;
    margin-bottom: 2px;
    line-height: 20px;
}

.field-row {
    display: flex;
    gap: 15px;
}

.field-change {
    width: 133px;
}

.field-color {
    width: 170px;
}

.control {
    display: flex;
    align-items: center;
    height: 30px;
    padding-right: 8px;
}

.field-row .control {
    padding-right: 0;
}

.select {
    display: flex;
    align-items: center;
    height: 30px;
    padding: 0 15px 0 10px;
    border-radius: 8px;
    background-color: #f4f3f8;
}

.select select {
    flex: 1;
    min-width: 0;
    padding: 0;
    border: none;
    outline: none;
    appearance: none;
    background: none;
}

.field-color .select {
    padding: 0 10px 0 9px;
}

.swatch {
    width: 16px;
    height: 16px;
    margin-right: 6px;
    border: 1px solid #555;
    border-radius: 4px;
    background-color: #000a12;
}

input[type="checkbox"] {
    width: 16px;
    height: 16px;
    margin: 0 0 4px;
    border: 1px solid #000;
    border-radius: 4px;
    appearance: none;
}

input[type="checkbox"]:checked {
    background-color: #000;
    box-shadow: inset 0 0 0 2px #fff;
}

#bg-image {
    flex: 1;
    min-width: 0;
    height: 30px;
    border: none;
    border-radius: 8px;
    background-color: #f7f7f7;
}

.control button {
    margin-left: 6px;
}

.control button + button {
    margin-left: 14px;
}

.logic-row {
    display: grid;
    grid-template-columns: 1fr 1fr;
    gap: 15px;
}

.state {
    flex: 1;
    color: #b8b8b8;
}

/* Status bar */
.statusbar {
    display: grid;
    grid-template-columns: 11fr auto 12fr;
    align-items: center;
    height: 29px;
    padding: 0 14px;
    color: #fff;
}

.screen-nav,
.zoom,
.status-right {
    display: flex;
    align-items: center;
}

.screen-nav {
    gap: 15px;
}

.screen-pill {
    display: flex;
    align-items: center;
    justify-content: center;
    gap: 6px;
    width: 200px;
    height: 24px;
    padding: 0;
    border: none;
    border-radius: 12px;
    background-color: #4a4a4a;
    font-weight: bold;
}

.zoom {
    gap: 8px;
    font-family: "Open Sans", "Noto Sans", sans-serif;
}

input[type="range"] {
    width: 60px;
    height: 14px;
    margin: 0;
    appearance: none;
    background: linear-gradient(#fff, #fff) center / 100% 2px no-repeat;
}

input[type="range"]::-webkit-slider-thumb {
    width: 12px;
    height: 12px;
    border-radius: 50%;
    appearance: none;
    background-color: #fff;
}

.status-right {
    justify-content: flex-end;
}

.hub-state {
    display: flex;
    align-items: center;
    justify-content: center;
    gap: 4px;
    width: 118px;
    height: 20px;
    margin-right: 22px;
    padding: 0;
    border: none;
    border-radius: 10px;
    background-color: #484848;
    color: #808080;
    font-weight: bold;
}

.theme {
    gap: 5px;
    margin-right: 11px;
}

.flag {
    width: 22px;
    height: 15px;
}

.flag-blue { fill: #22c; }
.flag-white { stroke: #fff; stroke-width: 3px; }
.flag-thin { stroke: #e22; stroke-width: 1px; }
.flag-wide { stroke-width: 5px; }
.flag-red { stroke: #f11; stroke-width: 3px; }
```
